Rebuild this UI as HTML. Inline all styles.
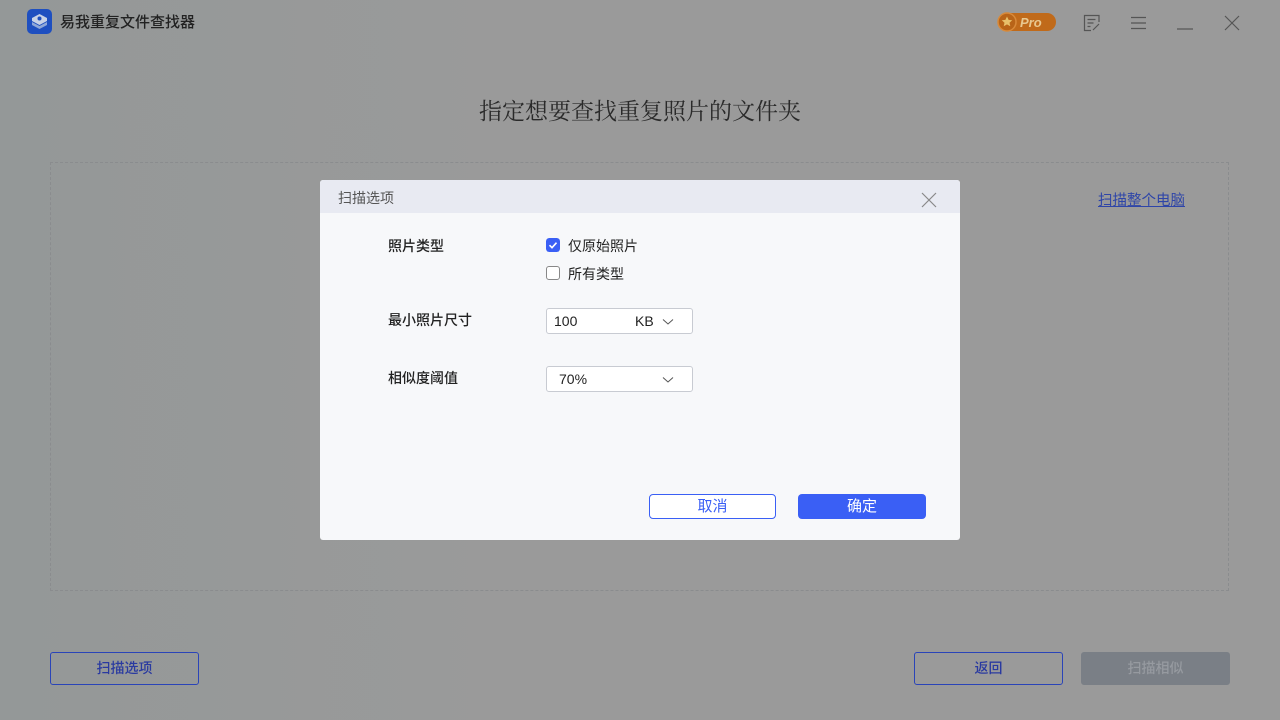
<!DOCTYPE html>
<html><head><meta charset="utf-8"><style>
*{margin:0;padding:0;box-sizing:border-box}
body{width:1280px;height:720px;overflow:hidden;background:#999a9a;font-family:"Liberation Sans","Noto Sans CJK SC",sans-serif;position:relative}
.bg{position:absolute;inset:0;background:linear-gradient(90deg,#949898 0%,#9a9a9a 40%,#9a9a9a 100%)}
.abs{position:absolute}
.title{left:60px;top:11px;font-size:15px;color:#222;font-weight:500}
.head{left:0;width:1280px;top:93px;text-align:center;font-size:23px;color:#2a2a2a;font-family:"Liberation Serif","Noto Serif CJK SC",serif}
.box{left:50px;top:162px;width:1179px;height:429px;border:1px dashed #8a8c8e}
.link{left:1098px;top:189px;font-size:14.5px;color:#2e45a8;text-decoration:underline}
.btn{height:33px;border:1px solid #2a44b8;border-radius:3px;font-size:14px;color:#2a3aa0;text-align:center;line-height:31px;font-weight:500}
.dlg{left:320px;top:180px;width:640px;height:360px;background:#f7f8fa;border-radius:3px;overflow:hidden}
.dh{height:33px;background:#e8eaf2;font-size:14px;color:#555;padding-left:18px;line-height:36px}
.lbl{font-size:14px;color:#222;font-weight:500}
.cb{width:14px;height:14px;border-radius:3px}
.sel{width:147px;height:26px;border:1px solid #c8cbd2;border-radius:3px;background:#fff;font-size:14px;color:#222;line-height:24px}
</style></head><body>
<div class="bg"></div>
<svg class="abs" style="left:27px;top:9px" width="25" height="25" viewBox="0 0 25 25"><rect width="25" height="25" rx="5" fill="#1e4fc0"/><path d="M5 13l7.5 4 7.5-4v3l-7.5 4-7.5-4z" fill="#8fa8d8"/><path d="M5 9l7.5-4 7.5 4v3l-7.5 4-7.5-4z" fill="#c8d2e6"/><circle cx="12.5" cy="9.5" r="2" fill="#1e4fc0"/></svg>
<div class="abs title">易我重复文件查找器</div>
<svg class="abs" style="left:996px;top:11px" width="62" height="22" viewBox="0 0 62 22"><rect x="2" y="2" width="58" height="18" rx="9" fill="#c06a1a"/><circle cx="11" cy="11" r="9" fill="#b86418" stroke="#d88a3a" stroke-width="1.5"/><path d="M11 5.5l1.6 3.4 3.6.4-2.7 2.4.8 3.6-3.3-1.9-3.3 1.9.8-3.6-2.7-2.4 3.6-.4z" fill="#e8c06a"/><text x="24" y="16" font-family="Liberation Sans" font-weight="bold" font-style="italic" font-size="13" fill="#e8c890">Pro</text></svg>
<svg class="abs" style="left:1083px;top:14px" width="18" height="18" viewBox="0 0 18 18" fill="none" stroke="#555" stroke-width="1.2"><path d="M16 8V1.5H1.5V16.5H8M4.5 5.5h8M4.5 9h6M4.5 12.5h3M10 16l6-6"/></svg>
<svg class="abs" style="left:1130px;top:16px" width="17" height="14" stroke="#555" stroke-width="1.2"><path d="M1 1.5h15M1 7h15M1 12.5h15"/></svg>
<svg class="abs" style="left:1176px;top:27px" width="18" height="4" stroke="#555" stroke-width="1.2"><path d="M1 2h16"/></svg>
<svg class="abs" style="left:1224px;top:15px" width="16" height="16" stroke="#555" stroke-width="1.2"><path d="M1 1l14 14M15 1L1 15"/></svg>
<div class="abs head">指定想要查找重复照片的文件夹</div>
<div class="abs box"></div>
<div class="abs link">扫描整个电脑</div>
<div class="abs btn" style="left:50px;top:652px;width:149px">扫描选项</div>
<div class="abs btn" style="left:914px;top:652px;width:149px">返回</div>
<div class="abs btn" style="left:1081px;top:652px;width:149px;background:#7a7f86;border-color:#7a7f86;color:#969aa0">扫描相似</div>
<div class="abs dlg">
 <div class="dh">扫描选项</div>
 <svg class="abs" style="left:601px;top:12px" width="16" height="16" stroke="#888" stroke-width="1.2"><path d="M1 1l14 14M15 1L1 15"/></svg>
 <div class="abs lbl" style="left:68px;top:56px">照片类型</div>
 <svg class="abs cb" style="left:226px;top:58px" width="14" height="14"><rect width="14" height="14" rx="3" fill="#3a5ff5"/><path d="M3.5 7.2l2.5 2.5 4.5-5" stroke="#fff" stroke-width="1.6" fill="none"/></svg>
 <div class="abs lbl" style="left:248px;top:56px;font-weight:normal">仅原始照片</div>
 <div class="abs cb" style="left:226px;top:86px;border:1px solid #888;background:#fff"></div>
 <div class="abs lbl" style="left:248px;top:84px;font-weight:normal">所有类型</div>
 <div class="abs lbl" style="left:68px;top:130px">最小照片尺寸</div>
 <div class="abs sel" style="left:226px;top:128px"><span style="margin-left:7px">100</span><span class="abs" style="left:88px">KB</span><svg class="abs" style="left:115px;top:9px" width="12" height="8" stroke="#555" fill="none"><path d="M1 1.5l5 4.5 5-4.5"/></svg></div>
 <div class="abs lbl" style="left:68px;top:188px">相似度阈值</div>
 <div class="abs sel" style="left:226px;top:186px"><span style="margin-left:12px">70%</span><svg class="abs" style="left:115px;top:9px" width="12" height="8" stroke="#555" fill="none"><path d="M1 1.5l5 4.5 5-4.5"/></svg></div>
 <div class="abs" style="left:329px;top:314px;width:127px;height:25px;border:1px solid #3a5ff5;border-radius:4px;background:#fff;color:#3a5ff5;font-size:15px;text-align:center;line-height:23px">取消</div>
 <div class="abs" style="left:478px;top:314px;width:128px;height:25px;border-radius:4px;background:#3a5ff5;color:#fff;font-size:15px;text-align:center;line-height:25px">确定</div>
</div>
</body></html>
